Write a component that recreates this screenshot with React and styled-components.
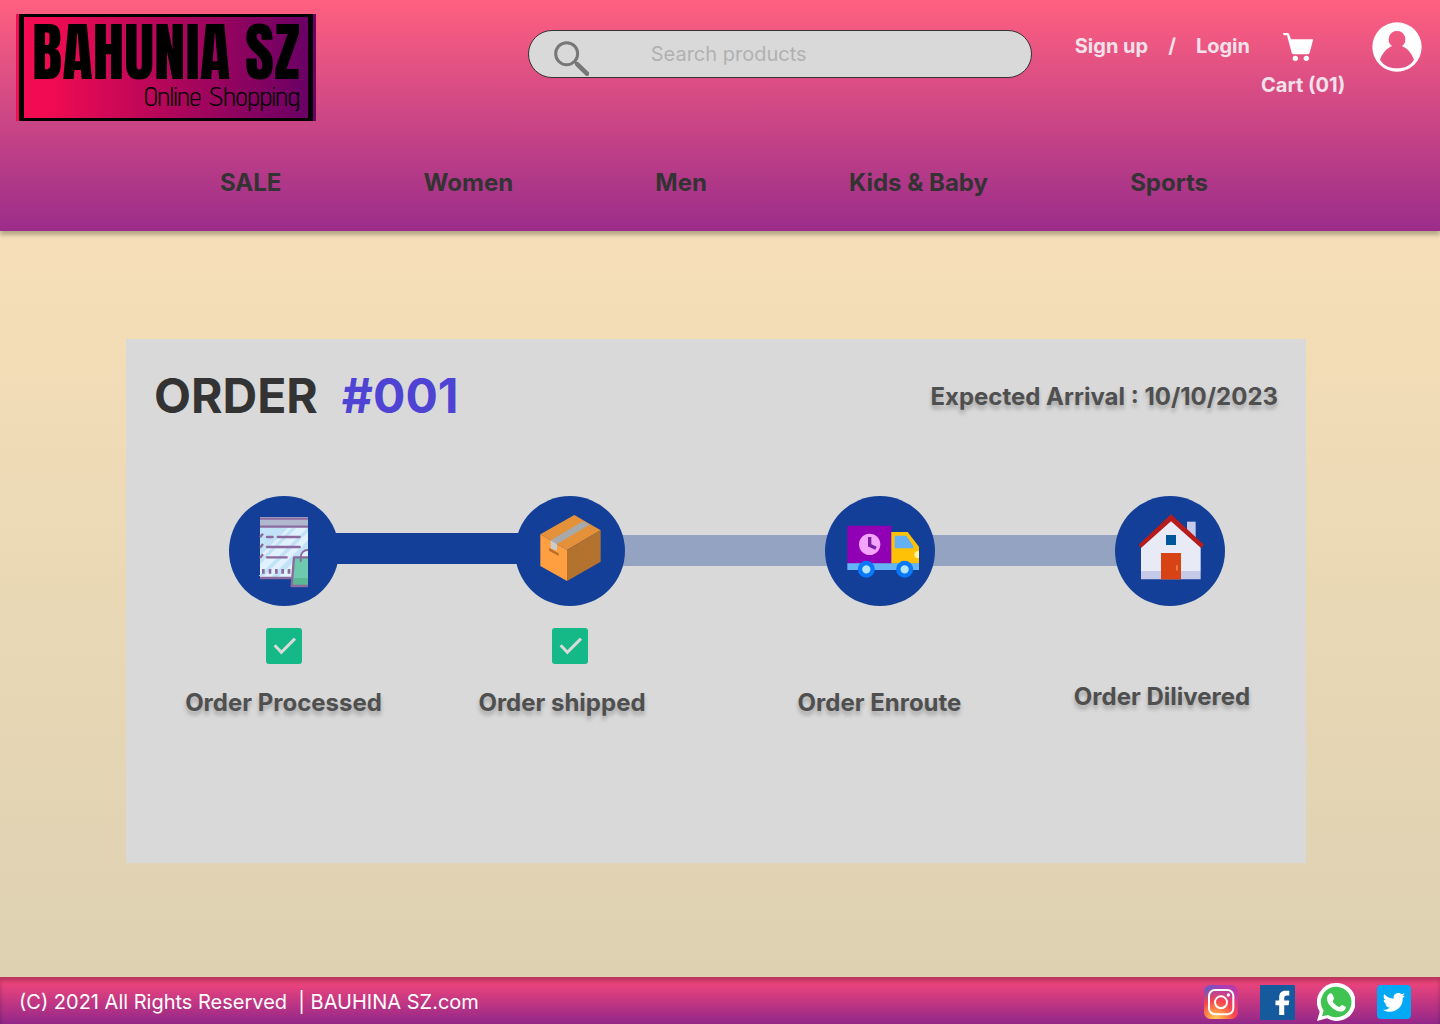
import React from "react";
import styled, { createGlobalStyle } from "styled-components";

const GlobalStyle = createGlobalStyle`
  *, *::before, *::after { box-sizing: border-box; }
  body { margin: 0; font-family: Inter, "Liberation Sans", sans-serif; color: #333333; }
  a { color: inherit; text-decoration: none; }
  svg { display: block; flex: none; }
`;

const Page = styled.div`
  display: flex;
  flex-direction: column;
  min-height: 100vh;
`;

const Header = styled.header`
  z-index: 1;
  padding: 14px 18px 34px 16px;
  background: linear-gradient(180deg, #ff6080 0%, #9b2d8a 100%);
  box-shadow: 0 4px 4px rgba(0, 0, 0, 0.25);
`;

const TopBar = styled.div`
  display: flex;
  align-items: flex-start;
  gap: 43px;
`;

const Logo = styled.a`
  flex: none;
  width: 300px;
  padding: 0 3px;
  background: linear-gradient(90deg, #f60b52 0%, #ef0b52 12%, #6c0064 96%);
  color: #000000;
`;

const LogoFrame = styled.span`
  display: flex;
  flex-direction: column;
  align-items: flex-end;
  height: 107px;
  padding: 0 8px;
  border: solid #000000;
  border-width: 3px 5px;
`;

const LogoName = styled.span`
  font-family: Anton, "Roboto Condensed", "Liberation Sans Narrow", sans-serif;
  font-size: 63px;
  line-height: 72px;
  font-weight: 400;
  white-space: nowrap;
`;

const LogoTagline = styled.span`
  font-family: "Advent Pro", Dosis, Roboto, sans-serif;
  font-size: 27px;
  line-height: 14px;
  font-weight: 400;
`;

const Search = styled.label`
  flex: 0 1 504px;
  min-width: 0;
  display: flex;
  align-items: center;
  gap: 62px;
  height: 48px;
  margin: 16px 0 0 auto;
  padding: 0 25px;
  border: 1px solid #333333;
  border-radius: 24px;
  background: #d9d9d9;
  svg { margin-top: 8px; }
`;

const SearchInput = styled.input`
  flex: 1;
  min-width: 0;
  padding: 0;
  border: 0;
  outline: 0;
  background: transparent;
  color: #333333;
  font: 400 20px/24px Inter, sans-serif;
  &::placeholder { color: #b1b1b1; opacity: 1; }
`;

const Account = styled.div`
  display: flex;
  flex: none;
  color: #f2e1ea;
  font-size: 20px;
  line-height: 24px;
  font-weight: 700;
`;

const AuthLinks = styled.div`
  display: flex;
  gap: 20px;
  margin: 20px 11px 0 0;
`;

const CartLink = styled.a`
  display: flex;
  flex-direction: column;
  gap: 12px;
  min-width: 87px;
  margin: 19px 24px 0 0;
  svg { margin-left: 22px; }
`;

const Profile = styled.button`
  height: 50px;
  margin-top: 8px;
  padding: 0;
  border: 0;
  background: transparent;
  cursor: pointer;
`;

const Nav = styled.nav`
  display: flex;
  justify-content: space-between;
  margin-top: 47px;
  padding: 0 214px 0 204px;
  font-size: 24px;
  line-height: 29px;
  font-weight: 700;
`;

const Main = styled.main`
  flex: 1;
  display: flex;
  padding: 108px 134px 114px 126px;
  background: linear-gradient(180deg, #f6dfb8 0%, #ddd1b2 100%);
`;

const Card = styled.section`
  flex: 1;
  min-width: 0;
  padding: 28px;
  background: #d9d9d9;
`;

const CardHeader = styled.div`
  display: flex;
  align-items: center;
  justify-content: space-between;
`;

const Title = styled.h1`
  display: flex;
  gap: 24px;
  margin: 0;
  font-size: 48px;
  line-height: 58px;
  font-weight: 700;
`;

const OrderNumber = styled.span`
  color: #4f43d4;
`;

const ShadowText = styled.p`
  margin: 0;
  color: #4f4f4f;
  font-size: 24px;
  line-height: 29px;
  font-weight: 700;
  text-shadow: 0 4px 4px rgba(0, 0, 0, 0.25);
  white-space: nowrap;
`;

const Tracker = styled.div`
  display: flex;
  margin: 71px 53px 0 75px;
`;

const Step = styled.div`
  z-index: 1;
  flex: none;
  display: flex;
  flex-direction: column;
  align-items: center;
  gap: 22px;
  width: 110px;
`;

const StepCircle = styled.div`
  width: 110px;
  height: 110px;
  border-radius: 50%;
  background: #133f98;
`;

const Connector = styled.div`
  flex: ${(p) => p.$span} 1 0;
  height: 31px;
  margin: ${(p) => (p.$done ? 37 : 39)}px -6px 0;
  background: ${(p) => (p.$done ? "#133f98" : "#95a3c3")};
`;

const Check = styled.label`
  display: grid;
  > * { grid-area: 1 / 1; }
  svg { pointer-events: none; }
`;

const CheckBox = styled.input`
  appearance: none;
  width: 36px;
  height: 36px;
  margin: 0;
  border-radius: 3px;
  background: #15b887;
`;

const Labels = styled.div`
  display: grid;
  grid-template-columns: 279fr 278fr 357fr 208fr;
  justify-items: center;
  align-items: end;
  height: 35px;
  margin: 18px 12px 0 -10px;
`;

const StepLabel = styled(ShadowText)`
  align-self: ${(p) => (p.$raised ? "start" : "end")};
`;

const Footer = styled.footer`
  display: flex;
  align-items: center;
  justify-content: space-between;
  padding: 6px 29px 3px 19px;
  background: linear-gradient(180deg, #f9487a 0%, #92278a 100%);
  box-shadow: inset 0 4px 4px rgba(0, 0, 0, 0.25);
  color: #ffffff;
  font-size: 20px;
  line-height: 24px;
`;

const Copyright = styled.p`
  margin: 0;
  white-space: pre-wrap;
`;

const Socials = styled.div`
  display: flex;
  align-items: center;
  gap: 22px;
`;

const SearchIcon = () => (
  <svg width="35" height="35" viewBox="98 62 105 105" fill="none" stroke="#777777" aria-hidden="true">
    <circle cx="136" cy="100" r="33" strokeWidth="9" />
    <path d="M160 124 170 134" strokeWidth="8" />
    <path d="M168 132 197 160" strokeWidth="14" strokeLinecap="round" />
  </svg>
);

const CartIcon = () => (
  <svg width="30" height="28" viewBox="667 69 90 84" fill="#ffffff" aria-hidden="true">
    <path d="M667 69H681Q684 69 685 72L691 88H755Q758 88 757 91L747 128Q746 133 741 133H700Q695 133 693 128L679 76H671Q668 76 667 69Z" />
    <circle cx="704" cy="145" r="8" />
    <circle cx="737" cy="145" r="8" />
  </svg>
);

const ProfileIcon = () => (
  <svg width="50" height="50" viewBox="936 36 150 150" aria-hidden="true">
    <path fill="#ffffff" fillRule="evenodd" d="M1011 37a74 74 0 1 0 0 148 74 74 0 1 0 0-148ZM1011 63a25 25 0 0 1 15 45C1041 114 1056 131 1062 149 1052 166 1034 175 1011 175S970 166 960 149C966 131 981 114 996 108a25 25 0 0 1 15-45Z" />
  </svg>
);

const ReceiptIcon = () => (
  <svg width="110" height="110" viewBox="27 18 330 330" aria-hidden="true">
    <path fill="#e1f1fd" d="M120 82H264V264H120Z" />
    <path fill="#c2e2f7" d="M120 112H206L120 198ZM218 112H231L120 223V210ZM264 112V126L132 258H116ZM264 150V172L175 261H153Z" />
    <path fill="#b0b8d0" d="M120 88H264V108H120Z" />
    <path stroke="#8b6a9e" strokeWidth="7" d="M120 86H264M120 110H264M120 264H216" />
    <path stroke="#8b6a9e" strokeWidth="7" strokeLinecap="round" d="M141 141H158M173 141H239M141 171H239M141 202H200" />
    <path stroke="#8b6a9e" strokeWidth="7" d="M120 142 129 131M120 173 129 162M120 204 129 193" />
    <path fill="#8b6a9e" d="M126 237h8v14h-8zM146 237h8v14h-8zM165 237h8v14h-8zM184 237h8v14h-8zM203 237h8v14h-8z" />
    <path fill="#6fc9af" d="M222 202H264V288H215Z" />
    <path fill="#5bb894" d="M217 264H264V288H215Z" />
    <path fill="none" stroke="#8b6a9e" strokeWidth="7" strokeLinejoin="round" d="M264 202H222L215 288H264" />
    <path fill="none" stroke="#8b6a9e" strokeWidth="6" d="M242 215V203C242 188 252 180 264 179" />
  </svg>
);

const BoxIcon = () => (
  <svg width="110" height="110" viewBox="30 18 330 330" aria-hidden="true">
    <path fill="#e59139" d="M106 133 208 75 287 121 186 180Z" />
    <path fill="#ff9f40" d="M106 133 186 180V273L106 228Z" />
    <path fill="#b3722e" d="M186 180 287 121V215L186 273Z" />
    <path fill="#a8a9aa" d="M137 151 234 94 254 104 156 162Z" />
    <path fill="#b3722e" d="M132 174 161 190V198L132 182Z" />
    <path fill="#cbcccd" d="M137 151 156 162V182L137 174Z" />
  </svg>
);

const TruckIcon = () => (
  <svg width="110" height="110" viewBox="30 18 330 330" aria-hidden="true">
    <path fill="#9200b5" d="M97 107H229V221H97Z" />
    <path fill="#ffc107" d="M229 126H278L312 170V221H229Z" />
    <path fill="#64b0f4" d="M239 137H274L295 168V175H239Z" />
    <path fill="#fff3a0" d="M312 184H304Q298 186 298 194T304 204H312Z" />
    <path fill="#64b5f6" d="M97 220H312V240H97Z" />
    <circle cx="164" cy="163" r="32" fill="#f4a3ff" />
    <path fill="none" stroke="#7b1fa2" strokeWidth="10" d="M164 141V166L183 175" />
    <g fill="#b3e5fc" stroke="#0a78fa" strokeWidth="13">
      <circle cx="154" cy="238" r="19" />
      <circle cx="269" cy="238" r="19" />
    </g>
  </svg>
);

const HouseIcon = () => (
  <svg width="110" height="110" viewBox="30 18 330 330" aria-hidden="true">
    <path fill="#c5cae9" d="M246 95H272V150H246Z" />
    <path fill="#e8eaf6" d="M198 86 287 165V244H108V165Z" />
    <path fill="#c5cae9" d="M108 243H287V268H108Z" />
    <path fill="#b71c1c" d="M198 73 297 164 288 174 198 94 108 174 101 164Z" />
    <path fill="#01579b" d="M183 135H213V165H183Z" />
    <path fill="#d84315" d="M168 189H228V268H168Z" />
    <path stroke="#ff8a65" strokeWidth="4" strokeLinecap="round" d="M216 227V240" />
  </svg>
);

const CheckIcon = () => (
  <svg width="36" height="36" viewBox="141 415 108 108" fill="none" stroke="#d9d9d9" strokeWidth="9" aria-hidden="true">
    <path d="M167 467 187 488 228 447" />
  </svg>
);

const InstagramIcon = () => (
  <svg width="34" height="34" viewBox="39 45 102 102" aria-hidden="true">
    <defs>
      <linearGradient id="ig-base" x1="0" y1="0" x2="1" y2="0.15">
        <stop offset="0" stopColor="#5b5fc9" />
        <stop offset="0.5" stopColor="#a63db5" />
        <stop offset="1" stopColor="#c13aa5" />
      </linearGradient>
      <radialGradient id="ig-glow" cx="0.35" cy="1.02" r="0.95">
        <stop offset="0" stopColor="#ffd654" />
        <stop offset="0.3" stopColor="#ff8a45" />
        <stop offset="0.6" stopColor="#f7434f" />
        <stop offset="1" stopColor="#f7434f" stopOpacity="0" />
      </radialGradient>
    </defs>
    <rect x="39" y="45" width="102" height="102" rx="20" fill="url(#ig-base)" />
    <rect x="39" y="45" width="102" height="102" rx="20" fill="url(#ig-glow)" />
    <g fill="none" stroke="#ffffff" strokeWidth="6">
      <rect x="54" y="60" width="73" height="73" rx="18" />
      <circle cx="90" cy="97" r="18" />
    </g>
    <circle cx="112" cy="75" r="5" fill="#ffffff" />
  </svg>
);

const FacebookIcon = () => (
  <svg width="35" height="35" viewBox="212 44 104 104" aria-hidden="true">
    <rect x="212" y="44" width="104" height="104" rx="4" fill="#155a9c" />
    <path fill="#ffffff" d="M269 133V104H258V90H269V80C269 68 276 61 287 61H299V75H292C286 75 284 78 284 83V90H299L297 104H284V133Z" />
  </svg>
);

const WhatsAppIcon = () => (
  <svg width="38" height="38" viewBox="381 39 114 114" aria-hidden="true">
    <path fill="#ffffff" d="M438 39a57 57 0 1 1-27 106L381 153 389 125A57 57 0 0 1 438 39Z" />
    <path fill="#3fc351" d="M438 50a46 46 0 1 1-24 85L396 139 401 122A46 46 0 0 1 438 50Z" />
    <path fill="#ffffff" d="M417 72C420 69 425 69 427 73L432 84C433 87 429 91 428 94 432 102 440 109 448 111 451 110 453 105 457 105L467 110C469 113 465 121 458 124 446 127 431 120 421 108 411 97 407 81 417 72Z" />
  </svg>
);

const TwitterIcon = () => (
  <svg width="34" height="34" viewBox="561 45 102 102" aria-hidden="true">
    <rect x="561" y="45" width="102" height="102" rx="12" fill="#03a9f4" />
    <path fill="#ffffff" d="M645 77C643 80 641 82 638 84 640 109 620 125 600 125 592 125 585 123 579 119 587 120 594 117 599 113 593 113 588 109 586 103H592C585 101 581 96 581 89L587 91C581 86 579 79 583 72 590 81 600 86 611 86 609 76 616 69 625 69 629 69 632 71 635 73L643 70C642 73 640 76 637 78Z" />
  </svg>
);

const categories = ["SALE", "Women", "Men", "Kids & Baby", "Sports"];

const steps = [
  { label: "Order Processed", Icon: ReceiptIcon, done: true },
  { label: "Order shipped", Icon: BoxIcon, done: true, span: 177 },
  { label: "Order Enroute", Icon: TruckIcon, done: false, span: 199 },
  { label: "Order Dilivered", Icon: HouseIcon, done: false, span: 180, raised: true },
];

const socials = [
  { name: "Instagram", Icon: InstagramIcon },
  { name: "Facebook", Icon: FacebookIcon },
  { name: "WhatsApp", Icon: WhatsAppIcon },
  { name: "Twitter", Icon: TwitterIcon },
];

export default function App() {
  return (
    <Page>
      <GlobalStyle />
      <Header>
        <TopBar>
          <Logo href="#home">
            <LogoFrame>
              <LogoName>BAHUNIA SZ</LogoName>
              <LogoTagline>Online Shopping</LogoTagline>
            </LogoFrame>
          </Logo>
          <Search>
            <SearchIcon />
            <SearchInput type="search" placeholder="Search products" aria-label="Search products" />
          </Search>
          <Account>
            <AuthLinks>
              <a href="#signup">Sign up</a>
              <span>/</span>
              <a href="#login">Login</a>
            </AuthLinks>
            <CartLink href="#cart">
              <CartIcon />
              <span>Cart (01)</span>
            </CartLink>
            <Profile type="button" aria-label="Profile">
              <ProfileIcon />
            </Profile>
          </Account>
        </TopBar>
        <Nav>
          {categories.map((name) => (
            <a key={name} href="#shop">{name}</a>
          ))}
        </Nav>
      </Header>

      <Main>
        <Card>
          <CardHeader>
            <Title>
              <span>ORDER</span>
              <OrderNumber>#001</OrderNumber>
            </Title>
            <ShadowText>Expected Arrival : 10/10/2023</ShadowText>
          </CardHeader>
          <Tracker>
            {steps.map(({ label, Icon, done, span }) => (
              <React.Fragment key={label}>
                {span && <Connector $span={span} $done={done} />}
                <Step>
                  <StepCircle>
                    <Icon />
                  </StepCircle>
                  {done && (
                    <Check>
                      <CheckBox type="checkbox" defaultChecked aria-label={label} />
                      <CheckIcon />
                    </Check>
                  )}
                </Step>
              </React.Fragment>
            ))}
          </Tracker>
          <Labels>
            {steps.map(({ label, raised }) => (
              <StepLabel key={label} $raised={raised}>{label}</StepLabel>
            ))}
          </Labels>
        </Card>
      </Main>

      <Footer>
        <Copyright>{"(C) 2021 All Rights Reserved  | BAUHINA SZ.com"}</Copyright>
        <Socials>
          {socials.map(({ name, Icon }) => (
            <a key={name} href="#social" aria-label={name}>
              <Icon />
            </a>
          ))}
        </Socials>
      </Footer>
    </Page>
  );
}
